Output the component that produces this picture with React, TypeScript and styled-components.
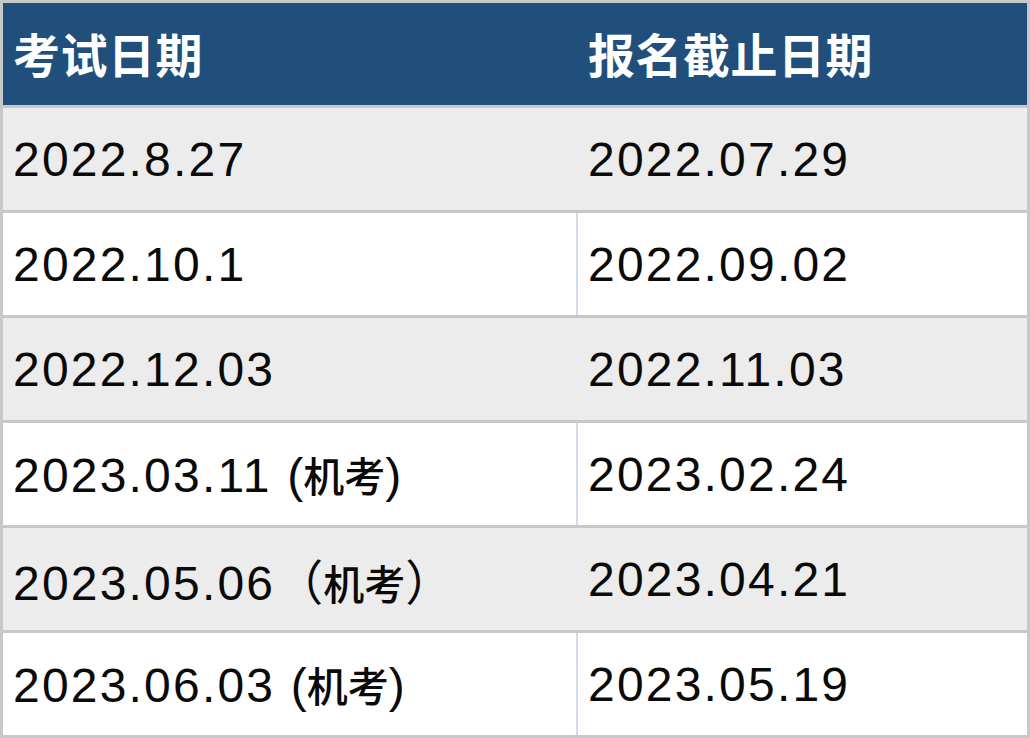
import React from 'react';
import styled, { createGlobalStyle } from 'styled-components';

const GlobalStyle = createGlobalStyle`
  html, body {
    margin: 0;
    padding: 0;
    background: #ffffff;
  }
  body {
    font-family: "Liberation Sans", "Noto Sans CJK SC", sans-serif;
  }
`;

// Table frame
const Sheet = styled.div`
  width: 1030px;
  height: 738px;
  box-sizing: border-box;
  border: 3px solid #c8c8c8;
  display: flex;
  flex-direction: column;
`;

const Row = styled.div<{ $tone: 'head' | 'gray' | 'white' }>`
  display: grid;
  grid-template-columns: 573px 1fr;
  height: 105px;
  box-sizing: border-box;
  border-bottom: 3px solid #c8c8c8;
  background-color: ${(p) =>
    p.$tone === 'head' ? '#1f4f7a' : p.$tone === 'gray' ? '#ececec' : '#ffffff'};
  &:last-child {
    height: 102px;
    border-bottom: none;
  }
`;

const Cell = styled.div<{ $divider?: string }>`
  display: flex;
  align-items: center;
  padding-left: 10px;
  box-sizing: border-box;
  border-left: ${(p) => (p.$divider ? `2px solid ${p.$divider}` : 'none')};
  white-space: nowrap;
`;

const HeadText = styled.span`
  font-family: "Noto Sans CJK SC", sans-serif;
  font-weight: 700;
  font-size: 47px;
  color: #ffffff;
  letter-spacing: 0.5px;
  margin-top: -4px;
`;

const DateText = styled.span`
  font-family: "Liberation Sans", "Noto Sans CJK SC", sans-serif;
  font-size: 48px;
  letter-spacing: 2.2px;
  color: #0a0a0a;
`;

const Note = styled.span`
  font-family: "Noto Sans CJK SC", sans-serif;
  font-size: 41px;
  font-weight: 500;
  letter-spacing: 0;
`;

const Paren = styled.span<{ $full?: boolean }>`
  font-family: ${(p) => (p.$full ? '"Noto Sans CJK SC"' : '"Liberation Sans"')}, sans-serif;
  letter-spacing: 0;
`;

type Entry = {
  exam: string;
  note?: 'half' | 'full';
  deadline: string;
};

const entries: Entry[] = [
  { exam: '2022.8.27', deadline: '2022.07.29' },
  { exam: '2022.10.1', deadline: '2022.09.02' },
  { exam: '2022.12.03', deadline: '2022.11.03' },
  { exam: '2023.03.11', note: 'half', deadline: '2023.02.24' },
  { exam: '2023.05.06', note: 'full', deadline: '2023.04.21' },
  { exam: '2023.06.03', note: 'half', deadline: '2023.05.19' },
];

function ExamDate({ entry }: { entry: Entry }) {
  if (!entry.note) return <DateText>{entry.exam}</DateText>;
  const full = entry.note === 'full';
  return (
    <DateText>
      {entry.exam}
      {full ? '' : ' '}
      <Paren $full={full}>{full ? '（' : '('}</Paren>
      <Note>机考</Note>
      <Paren $full={full}>{full ? '）' : ')'}</Paren>
    </DateText>
  );
}

export default function App() {
  return (
    <>
      <GlobalStyle />
      <Sheet>
        <Row $tone="head">
          <Cell>
            <HeadText>考试日期</HeadText>
          </Cell>
          <Cell $divider="#1f4f7a">
            <HeadText>报名截止日期</HeadText>
          </Cell>
        </Row>
        {entries.map((entry, i) => {
          const tone = i % 2 === 0 ? 'gray' : 'white';
          return (
            <Row key={entry.exam} $tone={tone}>
              <Cell>
                <ExamDate entry={entry} />
              </Cell>
              <Cell $divider={tone === 'gray' ? '#ececec' : '#d3dbe9'}>
                <DateText>{entry.deadline}</DateText>
              </Cell>
            </Row>
          );
        })}
      </Sheet>
    </>
  );
}
